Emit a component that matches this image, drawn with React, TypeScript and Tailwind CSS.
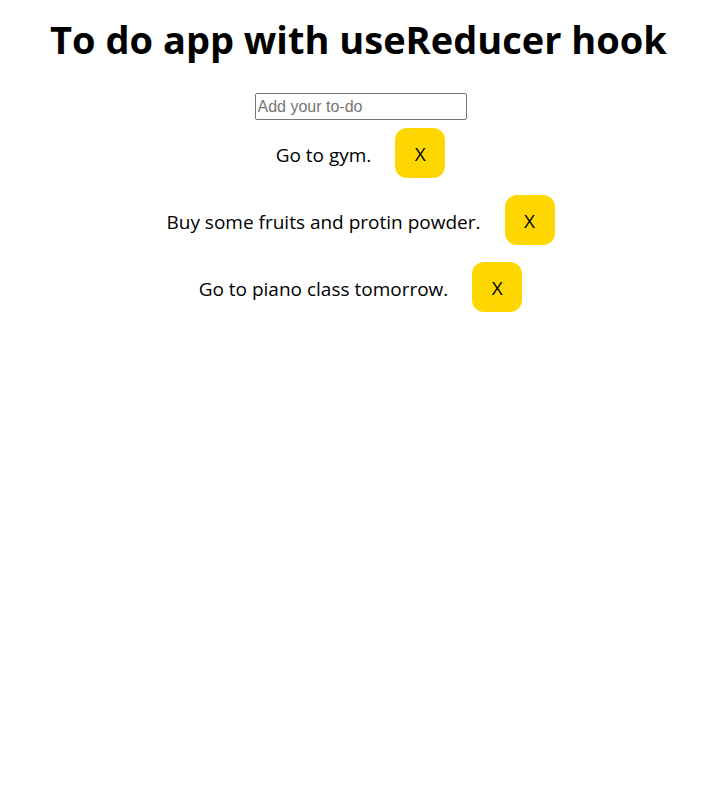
const todos = [
  "Go to gym.",
  "Buy some fruits and protin powder.",
  "Go to piano class tomorrow.",
];

export default function App() {
  return (
    <div className="flex flex-col items-center bg-white text-black font-['Open_Sans',sans-serif]">
      <h1 className="mt-[13px] text-[38px] font-bold leading-[52px]">To do app with useReducer hook</h1>
      <input
        type="text"
        placeholder="Add your to-do"
        className="mt-[28px] ml-[4px] w-[212px] h-[27px] border border-[#767676] rounded-[2px] px-[2px] text-[16px] font-['Liberation_Sans',sans-serif] placeholder:text-[#757575] outline-none"
      />
      <ul className="flex flex-col items-center gap-[17px] mt-[8px]">
        {todos.map((t) => (
          <li key={t} className="flex items-center gap-[24px] pl-[4px]">
            <span className="text-[19px] pt-[4px]">{t}</span>
            <button className="w-[50px] h-[50px] rounded-[12px] bg-[#ffd700] text-[19px] pt-[2px]">X</button>
          </li>
        ))}
      </ul>
    </div>
  );
}
